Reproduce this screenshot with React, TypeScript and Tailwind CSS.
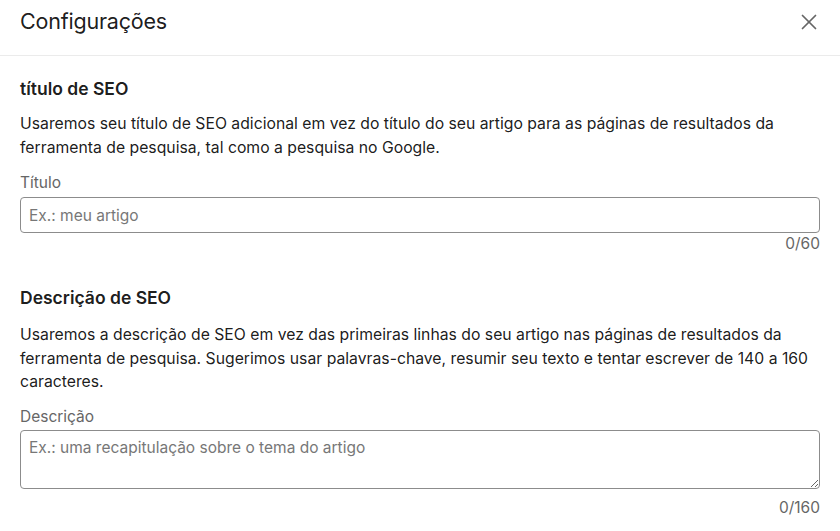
import { X } from 'lucide-react';

export default function App() {
  return (
    <div className="w-[840px] h-[531px] bg-white overflow-hidden text-[rgba(0,0,0,0.9)] font-['Inter','Liberation_Sans',sans-serif]">
      {/* Header */}
      <div className="flex items-center justify-between h-[56px] pl-5 pr-4 border-b border-[#ebebeb]">
        <h1 className="text-[21.5px] leading-none tracking-[-0.2px] pb-3">Configurações</h1>
        <button className="text-[#666] -mt-3 mr-[2px]">
          <X size={26} strokeWidth={1.6} />
        </button>
      </div>

      <div className="px-5 pt-[21px]">
        {/* SEO title */}
        <section>
          <h2 className="text-[17.5px] font-semibold leading-6">título de SEO</h2>
          <p className="mt-[11px] text-[15.75px] leading-[23.5px]">
            Usaremos seu título de SEO adicional em vez do título do seu artigo para as páginas de resultados da
            ferramenta de pesquisa, tal como a pesquisa no Google.
          </p>
          <label className="block mt-[14px] text-[15.5px] leading-5 text-[#666]">Título</label>
          <input
            placeholder="Ex.: meu artigo"
            className="block mt-[4px] w-full h-[36px] px-2 rounded border border-[#8c8c8c] text-[15.5px] placeholder:text-[#777] outline-none"
          />
          <div className="mt-[2px] text-right text-[15.5px] leading-[18px] text-[#666]">0/60</div>
        </section>

        {/* SEO description */}
        <section className="mt-[33px]">
          <h2 className="text-[17.5px] font-semibold leading-6">Descrição de SEO</h2>
          <p className="mt-[13px] text-[15.75px] leading-[23.5px]">
            Usaremos a descrição de SEO em vez das primeiras linhas do seu artigo nas páginas de resultados da
            ferramenta de pesquisa. Sugerimos usar palavras-chave, resumir seu texto e tentar escrever de 140 a 160
            caracteres.
          </p>
          <label className="block mt-[13px] text-[15.5px] leading-5 text-[#666]">Descrição</label>
          <textarea
            placeholder="Ex.: uma recapitulação sobre o tema do artigo"
            className="block mt-[3px] w-full h-[59px] px-2 py-[7px] rounded border border-[#8c8c8c] text-[15.5px] leading-5 placeholder:text-[#777] outline-none resize-y"
          />
          <div className="text-right text-[15.5px] leading-[18px] text-[#666] mt-[10px]">0/160</div>
        </section>
      </div>
    </div>
  );
}
